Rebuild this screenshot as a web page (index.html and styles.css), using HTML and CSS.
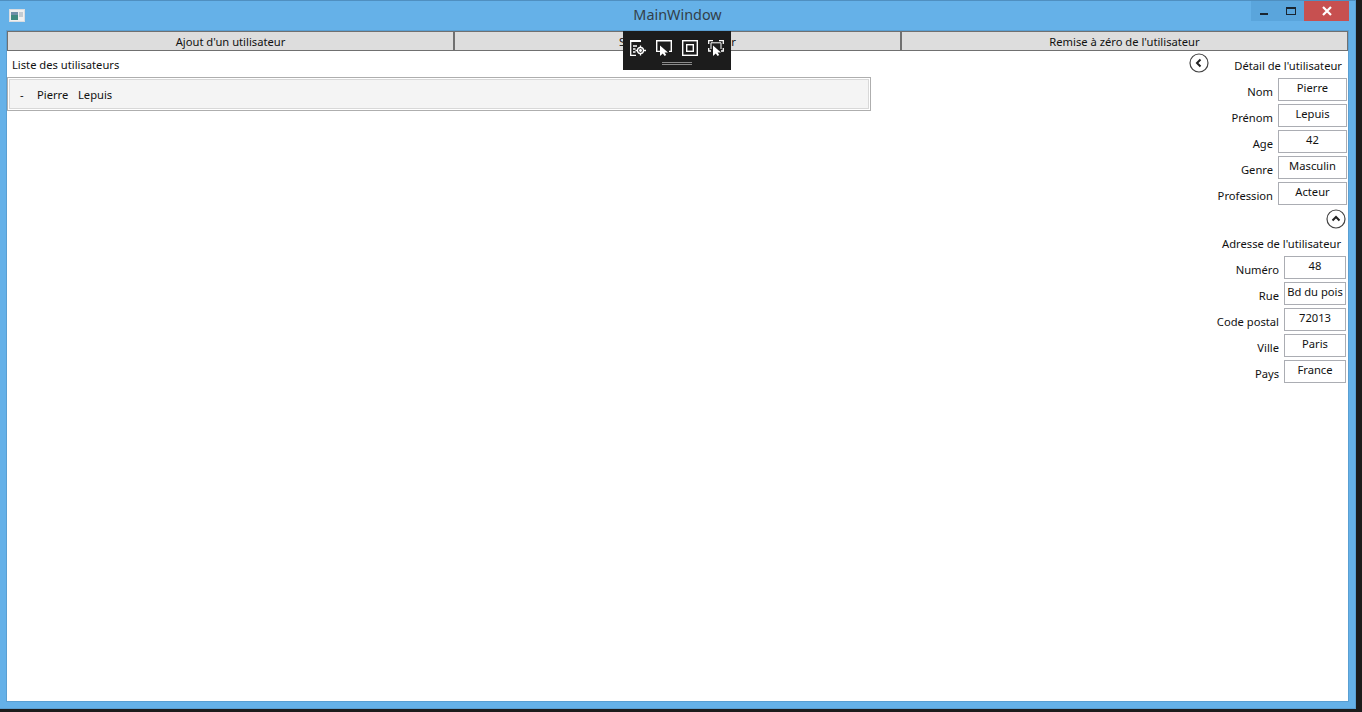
FILE: index.html
```html
<!DOCTYPE html>
<html lang="fr">
<head>
<meta charset="utf-8">
<title>MainWindow</title>
<link rel="stylesheet" href="styles.css">
</head>
<body>
<div class="window">
  <header class="titlebar">
    <svg class="app-icon" width="16" height="14" viewBox="0 0 16 14">
      <rect x="0.5" y="0.5" width="15" height="12" fill="#f0f0f0" stroke="#d8dde2"/>
      <rect x="2" y="3" width="7" height="8" fill="#3f8a80"/>
      <rect x="2" y="3" width="7" height="3" fill="#6f8fa8"/>
      <rect x="10" y="3" width="4" height="5" fill="#c4ccd2"/>
    </svg>
    <h1 class="title">MainWindow</h1>
    <div class="controls">
      <div class="ctl ctl-min"><span class="min-glyph"></span></div>
      <div class="ctl ctl-max"><span class="max-glyph"></span></div>
      <div class="ctl ctl-close">
        <svg width="12" height="10" viewBox="0 0 12 10"><path d="M2 1 L10 9 M10 1 L2 9" stroke="#fff" stroke-width="2.2" fill="none"/></svg>
      </div>
    </div>
  </header>

  <main class="client">
    <nav class="actions">
      <button class="action">Ajout d'un utilisateur</button>
      <button class="action">Supprimer l'utilisateur</button>
      <button class="action">Remise à zéro de l'utilisateur</button>
    </nav>

    <div class="panes">
      <section class="list-pane">
        <div class="list-title">Liste des utilisateurs</div>
        <div class="list-box">
          <div class="list-item"><span class="dash">-</span><span class="first">Pierre</span><span>Lepuis</span></div>
        </div>
      </section>

      <aside class="detail-pane">
        <div class="detail-head">
          <svg class="round-btn" width="20" height="20" viewBox="0 0 20 20"><circle cx="10" cy="10" r="9" fill="#fff" stroke="#444" stroke-width="1.2"/><path d="M11.5 6.5 L8 10 L11.5 13.5" fill="none" stroke="#222" stroke-width="2"/></svg>
          <div class="section-title">Détail de l'utilisateur</div>
        </div>
        <div class="fields">
          <div class="field"><label>Nom</label><div class="value">Pierre</div></div>
          <div class="field"><label>Prénom</label><div class="value">Lepuis</div></div>
          <div class="field"><label>Age</label><div class="value">42</div></div>
          <div class="field"><label>Genre</label><div class="value">Masculin</div></div>
          <div class="field"><label>Profession</label><div class="value">Acteur</div></div>
        </div>
        <div class="collapse-row">
          <svg class="round-btn" width="20" height="20" viewBox="0 0 20 20"><circle cx="10" cy="10" r="9" fill="#fff" stroke="#444" stroke-width="1.2"/><path d="M6.5 11.5 L10 8 L13.5 11.5" fill="none" stroke="#222" stroke-width="2"/></svg>
        </div>
        <div class="address">
          <div class="section-title address-title">Adresse de l'utilisateur</div>
          <div class="field"><label>Numéro</label><div class="value">48</div></div>
          <div class="field"><label>Rue</label><div class="value">Bd du pois</div></div>
          <div class="field"><label>Code postal</label><div class="value">72013</div></div>
          <div class="field"><label>Ville</label><div class="value">Paris</div></div>
          <div class="field"><label>Pays</label><div class="value">France</div></div>
        </div>
      </aside>
    </div>

    <div class="debug-bar">
      <div class="debug-icons">
        <svg width="16" height="16" viewBox="0 0 16 16" fill="none" stroke="#fff" stroke-width="1.3">
          <path d="M0.7 1 V15.3 H6 M3 6 H7 M3 9 H5.5 M3 12 H5.5"/>
          <path d="M0 1 H11" stroke-width="2"/>
          <circle cx="10.5" cy="10.5" r="3"/><circle cx="10.5" cy="10.5" r="0.8" fill="#fff"/>
          <path d="M10.5 5.5 V7.5 M10.5 13.5 V15.5 M5.5 10.5 H7.5 M13.5 10.5 H16"/>
        </svg>
        <svg width="16" height="16" viewBox="0 0 16 16" fill="none">
          <path d="M4 11.4 H0.7 V0.7 H15.3 V11.4 H13" stroke="#fff" stroke-width="1.4"/>
          <path d="M4 5.5 V16 L6.8 13.4 L8.6 16 L10.2 15 L8.6 12.4 H12 Z" fill="#fff"/>
        </svg>
        <svg width="16" height="16" viewBox="0 0 16 16" fill="none" stroke="#fff" stroke-width="1.4">
          <rect x="0.7" y="0.7" width="14.6" height="14.6"/>
          <rect x="4.7" y="4.7" width="6.6" height="6.6"/>
        </svg>
        <svg width="16" height="16" viewBox="0 0 16 16" fill="none">
          <path d="M0.7 4 V0.7 H5 M11 0.7 H15.3 V4 M15.3 8 V11 H13 M0.7 8 V11 H3" stroke="#fff" stroke-width="1.3"/>
          <path d="M3 2.8 H13 M3 2.8 V9 M13 2.8 V9" stroke="#fff" stroke-width="1"/>
          <path d="M5 5.5 V16 L7.8 13.4 L9.6 16 L11.2 15 L9.6 12.4 H13 Z" fill="#fff"/>
        </svg>
      </div>
      <div class="debug-grip"></div>
    </div>
  </main>
</div>
</body>
</html>
```

FILE: styles.css
```css
* { box-sizing: border-box; }
html, body { margin: 0; height: 100%; overflow: hidden; }
body {
  background: #1c1c1c;
  font-family: "Noto Sans", "Open Sans", "Liberation Sans", sans-serif;
  font-size: 11.2px;
  color: #111;
}
.window {
  width: 1356px;
  height: 709px;
  display: flex;
  flex-direction: column;
  background: #65b1e8;
  border-top: 1px solid #4f8fc0;
  border-right: 1px solid #5a9fd2;
  border-bottom: 1px solid #5a9fd2;
  padding: 0 7px 7px 7px;
}
.titlebar {
  height: 30px;
  flex: none;
  display: flex;
  align-items: flex-start;
  position: relative;
  margin: 0 -7px;
}
.app-icon { margin: 8px 0 0 9px; }
.title {
  margin: 0;
  position: absolute;
  left: 0;
  right: 0;
  top: 4px;
  text-align: center;
  font-size: 14.4px;
  font-weight: 400;
  line-height: 20px;
  color: #333f4a;
}
.controls {
  margin-left: auto;
  margin-right: 6px;
  display: flex;
  height: 20px;
}
.ctl { height: 20px; display: flex; align-items: center; justify-content: center; }
.ctl-min { width: 26px; background: #5aa5dc; }
.ctl-max { width: 27px; background: #5aa5dc; }
.ctl-close { width: 45px; background: #c75050; }
.min-glyph { width: 8px; height: 2px; background: #1a2530; margin-top: 6px; }
.max-glyph { width: 10px; height: 8px; border: 1px solid #1a2530; border-top-width: 2px; }

.client {
  flex: 1;
  background: #fff;
  display: flex;
  flex-direction: column;
  position: relative;
  outline: 1px solid #5a9fd2;
  min-height: 0;
}
.actions {
  display: grid;
  grid-template-columns: repeat(3, 1fr);
  height: 20px;
  flex: none;
}
.action {
  font: inherit;
  color: #111;
  background: #dddddd;
  border: 1px solid #707070;
  padding: 2px 0 0;
  margin: 0;
  line-height: 16px;
  text-align: center;
}
.panes { flex: 1; display: flex; justify-content: space-between; min-height: 0; }
.list-pane { width: 864px; }
.list-title { padding: 6px 0 0 5px; height: 26px; line-height: 16px; }
.list-box {
  height: 34px;
  border: 1px solid #aeaeae;
  padding: 1px;
}
.list-item {
  height: 30px;
  background: #f4f4f4;
  border: 1px solid #d8d8d8;
  display: flex;
  align-items: center;
  padding: 2px 0 0 10px;
  line-height: 16px;
}
.dash { width: 17px; }
.first { width: 41px; }

.detail-pane { width: 160px; display: flex; flex-direction: column; margin-left: auto; }
.detail-head { display: flex; height: 27px; padding-top: 2px; }
.round-btn { flex: none; display: block; }
.detail-head .round-btn { margin-left: 1px; }
.section-title { line-height: 16px; white-space: nowrap; }
.detail-head .section-title { margin-left: auto; margin-right: 6px; padding-top: 5px; }
.fields { display: flex; flex-direction: column; padding-right: 1px; }
.field {
  display: flex;
  justify-content: flex-end;
  align-items: flex-start;
  height: 26px;
}
.field label { line-height: 16px; padding-top: 6px; margin-right: 5px; white-space: nowrap; }
.value {
  width: 69px;
  height: 23px;
  border: 1px solid #abadb3;
  background: #fff;
  text-align: center;
  line-height: 16px;
  padding-top: 1px;
  white-space: nowrap;
  overflow: hidden;
}
.collapse-row { display: flex; justify-content: flex-end; padding: 1px 2px 0 0; height: 26px; }
.address { padding-right: 2px; display: flex; flex-direction: column; }
.address-title { align-self: flex-end; padding: 2px 5px 0 0; height: 22px; }
.address .value { width: 62px; }

.debug-bar {
  position: absolute;
  left: 616px;
  top: 0;
  width: 108px;
  height: 39px;
  background: #1c1c1c;
  display: flex;
  flex-direction: column;
  align-items: center;
}
.debug-icons { display: flex; gap: 10px; padding-top: 9px; height: 31px; }
.debug-grip {
  width: 30px;
  height: 3px;
  border-top: 1px solid #8a8a8a;
  border-bottom: 1px solid #8a8a8a;
}
```
